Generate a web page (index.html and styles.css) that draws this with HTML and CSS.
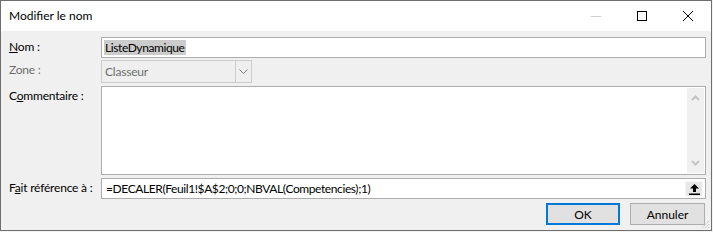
FILE: index.html
```html
<!DOCTYPE html>
<html lang="fr">
<head>
<meta charset="utf-8">
<title>Modifier le nom</title>
<link rel="stylesheet" href="styles.css">
</head>
<body>
<div class="window">
  <div class="titlebar">
    <span class="title">Modifier le nom</span>
    <div class="controls">
      <span class="ctl"><svg width="10" height="10" viewBox="0 0 10 10"><path d="M0 5.5H10" stroke="#cfcfcf" stroke-width="1"/></svg></span>
      <span class="ctl"><svg width="10" height="10" viewBox="0 0 10 10"><rect x="0.5" y="0.5" width="9" height="9" fill="none" stroke="#000" stroke-width="1"/></svg></span>
      <span class="ctl"><svg width="10" height="10" viewBox="0 0 10 10"><path d="M0 0L10 10M10 0L0 10" stroke="#000" stroke-width="1"/></svg></span>
    </div>
  </div>
  <div class="content">
    <div class="row row-nom">
      <label class="lbl"><u>N</u>om :</label>
      <div class="field"><span class="selected">ListeDynamique</span></div>
    </div>
    <div class="row row-zone">
      <label class="lbl disabled">Zone :</label>
      <div class="select">
        <span class="select-text">Classeur</span>
        <span class="drop"><svg width="9" height="5" viewBox="0 0 9 5"><path d="M0.5 0.5L4.5 4.5L8.5 0.5" fill="none" stroke="#7a7a7a" stroke-width="1"/></svg></span>
      </div>
    </div>
    <div class="row row-comment">
      <label class="lbl">C<u>o</u>mmentaire :</label>
      <div class="textarea">
        <div class="scrollbar">
          <svg width="9" height="6" viewBox="0 0 9 6"><path d="M1 5L4.5 1.5L8 5" fill="none" stroke="#c4c4c4" stroke-width="2"/></svg>
          <svg width="9" height="6" viewBox="0 0 9 6"><path d="M1 1L4.5 4.5L8 1" fill="none" stroke="#c4c4c4" stroke-width="2"/></svg>
        </div>
      </div>
    </div>
    <div class="row row-ref">
      <label class="lbl">F<u>a</u>it référence à :</label>
      <div class="field ref">
        <span class="ref-text">=DECALER(Feuil1!$A$2;0;0;NBVAL(Competencies);1)</span>
        <span class="collapse"><svg width="11" height="12" viewBox="0 0 11 12"><path d="M5.5 1L1 5.5H4V9H7V5.5H10Z" fill="#000"/><rect x="0" y="10.5" width="11" height="1.5" fill="#000"/></svg></span>
      </div>
    </div>
    <div class="buttons">
      <button class="btn ok">OK</button>
      <button class="btn">Annuler</button>
    </div>
  </div>
  <svg class="grip" width="9" height="9" viewBox="0 0 9 9"><path d="M8 1L1 8M8 4L4 8M8 7L7 8" stroke="#b5b5b5" stroke-width="1" stroke-dasharray="1 1"/></svg>
</div>
</body>
</html>
```
FILE: styles.css
```css
* { box-sizing: border-box; }
html, body { margin: 0; padding: 0; }
body {
  background: #f3f3f3;
  font-family: Lato, "Liberation Sans", sans-serif;
  font-size: 12px;
  color: #000;
  width: 713px;
  height: 232px;
  overflow: hidden;
}
.window {
  position: relative;
  width: 712px;
  height: 231px;
  border: 1px solid #6f6f6f;
  background: #f0f0f0;
}
.titlebar {
  height: 30px;
  background: #fff;
  display: flex;
  align-items: center;
  justify-content: space-between;
}
.title {
  padding-left: 8px;
  font-size: 12px;
  line-height: 30px;
}
.controls { display: flex; height: 30px; }
.ctl {
  width: 46px;
  height: 30px;
  display: flex;
  align-items: center;
  justify-content: center;
}
.ctl svg { display: block; }
.content { padding: 6px 5px 0 8px; }
.row { display: flex; }
.lbl {
  width: 92px;
  flex: none;
  line-height: 18px;
  padding-top: 1px;
  white-space: nowrap;
  letter-spacing: -0.2px;
}
.lbl.disabled { color: #6d6d6d; }
.field {
  flex: 1;
  height: 21px;
  border: 1px solid #adadad;
  background: #fff;
  display: flex;
  align-items: center;
  padding-left: 2px;
  white-space: nowrap;
}
.selected { background: #cccccc; line-height: 15px; padding: 0 1px; letter-spacing: -0.4px; }
.row-zone { margin-top: 2px; }
.select {
  width: 151px;
  height: 23px;
  border: 1px solid #cccccc;
  background: #efefef;
  display: flex;
  align-items: center;
  color: #6d6d6d;
}
.select-text { flex: 1; padding-left: 3px; letter-spacing: -0.2px; }
.drop {
  width: 16px;
  height: 21px;
  border-left: 1px solid #cccccc;
  display: flex;
  align-items: center;
  justify-content: center;
}
.drop svg { display: block; }
.row-comment { margin-top: 3px; }
.textarea {
  flex: 1;
  height: 89px;
  border: 1px solid #adadad;
  background: #fff;
  display: flex;
  justify-content: flex-end;
  padding: 1px;
}
.scrollbar {
  width: 17px;
  background: #f0f0f0;
  display: flex;
  flex-direction: column;
  justify-content: space-between;
  align-items: center;
  padding: 7px 0 7px;
}
.scrollbar svg { display: block; }
.row-ref { margin-top: 3px; }
.ref { justify-content: space-between; padding-right: 2px; }
.ref-text { padding-left: 2px; letter-spacing: -0.4px; }
.collapse {
  width: 18px;
  height: 16px;
  background: #e8e8e8;
  border: 1px solid #f7f7f7;
  display: flex;
  align-items: center;
  justify-content: center;
}
.collapse svg { display: block; }
.buttons {
  display: flex;
  justify-content: flex-end;
  gap: 10px;
  margin-top: 4px;
  padding-right: 1px;
}
.btn {
  width: 75px;
  height: 22px;
  background: #e1e1e1;
  border: 1px solid #adadad;
  font-family: inherit;
  font-size: 12px;
  color: #000;
  padding: 0;
  margin: 0;
}
.btn.ok { border: 2px solid #0078d7; width: 74px; }
.grip { position: absolute; right: 1px; bottom: 1px; }
```
